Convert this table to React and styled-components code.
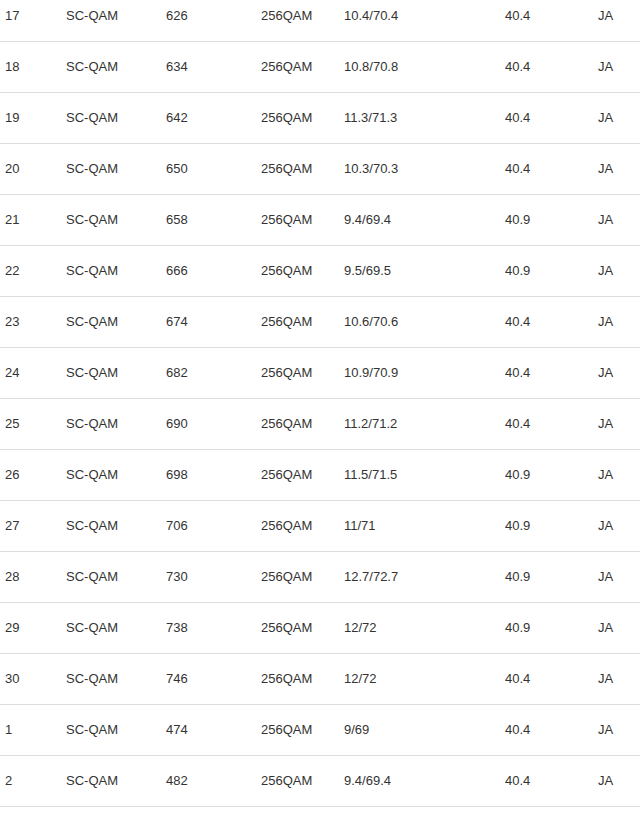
import React from "react";
import styled, { createGlobalStyle } from "styled-components";

const GlobalStyle = createGlobalStyle`
  html, body {
    margin: 0;
    padding: 0;
    background: #fff;
  }
  body {
    font-family: "Liberation Sans", Arial, sans-serif;
    font-size: 13px;
    line-height: 20px;
    color: #333;
  }
`;

const Wrapper = styled.div`
  width: 640px;
  margin-top: -10px;
`;

const Table = styled.table`
  width: 640px;
  border-collapse: collapse;
  table-layout: fixed;
  border-bottom: 1px solid #ddd;
`;

const Row = styled.tr`
  border-top: 1px solid #ddd;
`;

const Cell = styled.td`
  padding: 15px 0 15px 5px;
  vertical-align: top;
  white-space: nowrap;
  text-align: left;
`;

const widths = [61, 100, 95, 83, 161, 93, 47];

const rows = [
  ["17", "626", "10.4/70.4", "40.4"],
  ["18", "634", "10.8/70.8", "40.4"],
  ["19", "642", "11.3/71.3", "40.4"],
  ["20", "650", "10.3/70.3", "40.4"],
  ["21", "658", "9.4/69.4", "40.9"],
  ["22", "666", "9.5/69.5", "40.9"],
  ["23", "674", "10.6/70.6", "40.4"],
  ["24", "682", "10.9/70.9", "40.4"],
  ["25", "690", "11.2/71.2", "40.4"],
  ["26", "698", "11.5/71.5", "40.9"],
  ["27", "706", "11/71", "40.9"],
  ["28", "730", "12.7/72.7", "40.9"],
  ["29", "738", "12/72", "40.9"],
  ["30", "746", "12/72", "40.4"],
  ["1", "474", "9/69", "40.4"],
  ["2", "482", "9.4/69.4", "40.4"],
];

export default function App() {
  return (
    <>
      <GlobalStyle />
      <Wrapper>
        <Table>
          <colgroup>
            {widths.map((w, i) => (
              <col key={i} style={{ width: w }} />
            ))}
          </colgroup>
          <tbody>
            {rows.map(([id, freq, power, snr]) => (
              <Row key={id}>
                <Cell>{id}</Cell>
                <Cell>SC-QAM</Cell>
                <Cell>{freq}</Cell>
                <Cell>256QAM</Cell>
                <Cell>{power}</Cell>
                <Cell>{snr}</Cell>
                <Cell>JA</Cell>
              </Row>
            ))}
          </tbody>
        </Table>
      </Wrapper>
    </>
  );
}
